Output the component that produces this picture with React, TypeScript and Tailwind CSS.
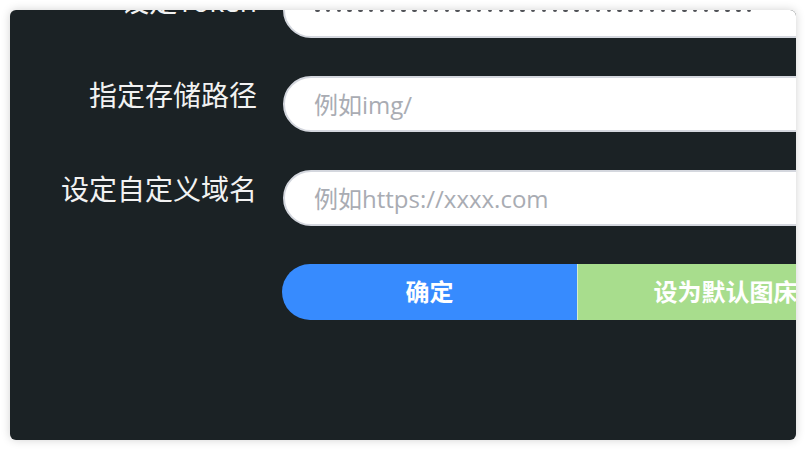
import React from "react";

const font = { fontFamily: '"Open Sans", "Noto Sans CJK SC", sans-serif' };

function Row({ label, children }: { label: string; children: React.ReactNode }) {
  return (
    <div className="flex items-start">
      <div className="w-[247px] shrink-0 text-right text-[28px] leading-[38px] text-[#f2f2f2]">{label}</div>
      <div className="ml-[26px] shrink-0">{children}</div>
    </div>
  );
}

function TextInput({ placeholder }: { placeholder: string }) {
  return (
    <input
      readOnly
      placeholder={placeholder}
      style={font}
      className="h-[56px] w-[620px] rounded-full border-2 border-[#d4d7de] bg-white pl-[29px] text-[24px] text-[#606266] outline-none placeholder:text-[#a9acb3]"
    />
  );
}

export default function App() {
  const dots = Array.from({ length: 41 });
  return (
    <div className="h-[450px] w-[806px] bg-white p-[10px]" style={font}>
      <div className="h-[430px] w-[786px] overflow-hidden rounded-[6px] bg-[#1b2225] shadow-[0_0_10px_rgba(0,0,0,0.18)]">
        <div className="mt-[-28px] flex flex-col gap-[38px]">
          <Row label="设定Token">
            <div className="flex h-[56px] w-[620px] items-center rounded-full border-2 border-[#d4d7de] bg-white pl-[30px]">
              <div className="flex gap-[6.3px]">
                {dots.map((_, i) => (
                  <span key={i} className="block h-[4.5px] w-[4.5px] rounded-full bg-[#505257]" />
                ))}
              </div>
            </div>
          </Row>
          <Row label="指定存储路径">
            <TextInput placeholder="例如img/" />
          </Row>
          <Row label="设定自定义域名">
            <TextInput placeholder="例如https://xxxx.com" />
          </Row>
          <div className="ml-[272px] flex">
            <button className="h-[56px] w-[295px] shrink-0 rounded-l-full bg-[#378bfe] text-[24px] font-bold text-white">
              确定
            </button>
            <button className="h-[56px] w-[296px] shrink-0 border-l-[1.5px] border-[#d6eccb] bg-[#a8dd8d] text-[24px] font-bold text-white">
              设为默认图床
            </button>
          </div>
        </div>
      </div>
    </div>
  );
}
